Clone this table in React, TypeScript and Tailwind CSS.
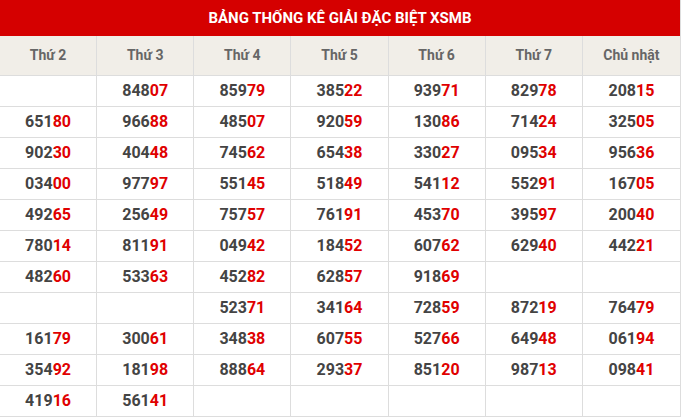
import React from 'react';

const days = ['Thứ 2', 'Thứ 3', 'Thứ 4', 'Thứ 5', 'Thứ 6', 'Thứ 7', 'Chủ nhật'];

const rows: string[][] = [
  ['', '84807', '85979', '38522', '93971', '82978', '20815'],
  ['65180', '96688', '48507', '92059', '13086', '71424', '32505'],
  ['90230', '40448', '74562', '65438', '33027', '09534', '95636'],
  ['03400', '97797', '55145', '51849', '54112', '55291', '16705'],
  ['49265', '25649', '75757', '76191', '45370', '39597', '20040'],
  ['78014', '81191', '04942', '18452', '60762', '62940', '44221'],
  ['48260', '53363', '45282', '62857', '91869', '', ''],
  ['', '', '52371', '34164', '72859', '87219', '76479'],
  ['16179', '30061', '34838', '60755', '52766', '64948', '06194'],
  ['35492', '18198', '88864', '29337', '85120', '98713', '09841'],
  ['41916', '56141', '', '', '', '', ''],
];

const Num = ({ value }: { value: string }) => {
  if (!value) return null;
  return (
    <span>
      <span className="text-[#444]">{value.slice(0, 3)}</span>
      <span className="text-[#e00000]">{value.slice(3)}</span>
    </span>
  );
};

export default function App() {
  return (
    <div className="w-[682px] h-[418px] overflow-hidden bg-white font-['Roboto',sans-serif]">
      <div className="w-[681px] border-r border-[#ddd]">
        <div className="h-9 bg-[#d50000] flex items-center justify-center text-white font-bold text-[15px] uppercase">
          BẢNG THỐNG KÊ GIẢI ĐẶC BIỆT XSMB
        </div>
        <div className="grid grid-cols-7 bg-[#f1eee8]">
          {days.map((d, i) => (
            <div
              key={d}
              className={`h-10 flex items-center justify-center text-[14px] font-bold text-[#666] border-b border-[#ddd] ${i < 6 ? 'border-r' : ''}`}
            >
              {d}
            </div>
          ))}
        </div>
        {rows.map((r, ri) => (
          <div key={ri} className="grid grid-cols-7">
            {r.map((v, ci) => (
              <div
                key={ci}
                className={`h-[31px] flex items-center justify-center text-[16px] font-bold border-b border-[#ddd] ${ci < 6 ? 'border-r' : ''}`}
              >
                <Num value={v} />
              </div>
            ))}
          </div>
        ))}
      </div>
    </div>
  );
}
